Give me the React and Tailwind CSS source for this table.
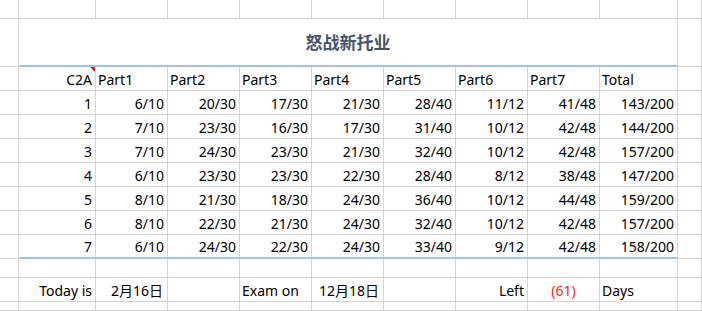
import React from 'react';

const rows = [
  ['1', '6/10', '20/30', '17/30', '21/30', '28/40', '11/12', '41/48', '143/200'],
  ['2', '7/10', '23/30', '16/30', '17/30', '31/40', '10/12', '42/48', '144/200'],
  ['3', '7/10', '24/30', '23/30', '21/30', '32/40', '10/12', '42/48', '157/200'],
  ['4', '6/10', '23/30', '23/30', '22/30', '28/40', '8/12', '38/48', '147/200'],
  ['5', '8/10', '21/30', '18/30', '24/30', '36/40', '10/12', '44/48', '159/200'],
  ['6', '8/10', '22/30', '21/30', '24/30', '32/40', '10/12', '42/48', '157/200'],
  ['7', '6/10', '24/30', '22/30', '24/30', '33/40', '9/12', '42/48', '158/200'],
];

const headers = ['Part1', 'Part2', 'Part3', 'Part4', 'Part5', 'Part6', 'Part7', 'Total'];

function Cell({ children, className = '' }) {
  return (
    <div className={`flex items-center overflow-hidden whitespace-nowrap border-r border-b border-[#d4d4d4] pt-px ${className}`}>
      {children}
    </div>
  );
}

export default function App() {
  return (
    <div className="grid h-[311px] w-[702px] grid-cols-[19px_77px_72px_72px_72px_72px_72px_72px_72px_78px_1fr] grid-rows-[19px_48px_24px_24px_24px_24px_24px_24px_24px_24px_19px_24px_1fr] bg-white font-['Noto_Sans','Noto_Sans_CJK_SC',sans-serif] text-[14px] text-black">
      {/* top blank row */}
      {Array.from({ length: 11 }).map((_, i) => (
        <Cell key={`top-${i}`} />
      ))}

      {/* title row */}
      <Cell />
      <div className="col-span-9 flex items-center justify-center border-r border-b-2 border-r-[#d4d4d4] border-b-[#9fc2e7] font-['Noto_Sans_CJK_SC',sans-serif] text-[17px] font-bold text-[#44546a]">
        怒战新托业
      </div>
      <Cell />

      {/* header row */}
      <Cell />
      <Cell className="relative justify-end pr-[3px]">
        C2A
        <span className="absolute top-0 right-0 h-0 w-0 border-t-[5px] border-l-[5px] border-t-[#e02020] border-l-transparent" />
      </Cell>
      {headers.map((h) => (
        <Cell key={h} className="pl-[2px]">
          {h}
        </Cell>
      ))}
      <Cell />

      {/* data rows */}
      {rows.map((r, ri) => {
        const last = ri === rows.length - 1;
        return (
          <React.Fragment key={r[0]}>
            <Cell />
            {r.map((v, ci) => (
              <Cell
                key={ci}
                className={`justify-end pr-[3px] ${last ? 'border-b-2 border-b-[#9fc2e7]' : ''}`}
              >
                {v}
              </Cell>
            ))}
            <Cell />
          </React.Fragment>
        );
      })}

      {/* empty row */}
      {Array.from({ length: 11 }).map((_, i) => (
        <Cell key={`empty-${i}`} />
      ))}

      {/* today row */}
      <Cell />
      <Cell className="justify-end pr-[3px]">Today is</Cell>
      <Cell className="justify-end pr-[4px]">2月16日</Cell>
      <Cell />
      <Cell className="pl-[2px]">Exam on</Cell>
      <Cell className="justify-end pr-[4px]">12月18日</Cell>
      <Cell />
      <Cell className="justify-end pr-[3px]">Left</Cell>
      <Cell className="justify-center text-[#ff2020]">(61)</Cell>
      <Cell className="pl-[2px]">Days</Cell>
      <Cell />

      {/* bottom partial row */}
      {Array.from({ length: 11 }).map((_, i) => (
        <Cell key={`bottom-${i}`} />
      ))}
    </div>
  );
}
